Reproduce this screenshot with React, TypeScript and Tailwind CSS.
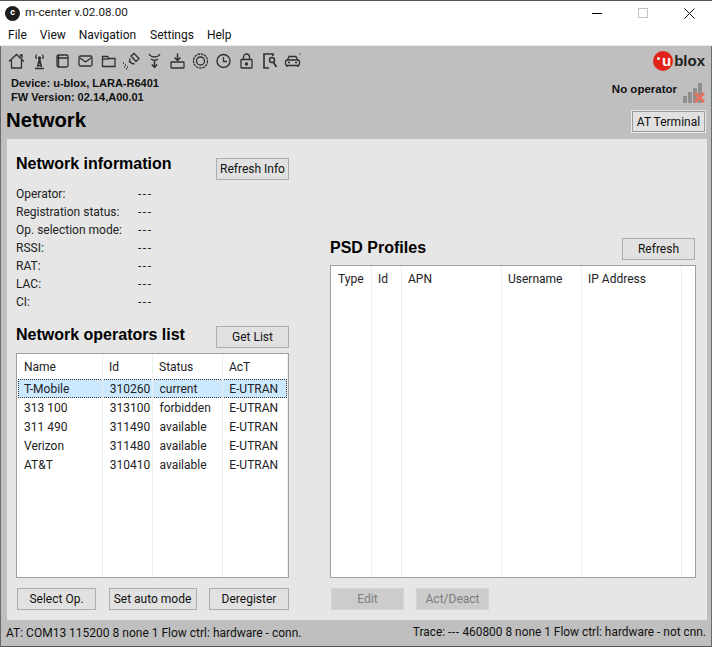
import type { ReactNode } from 'react';

const ui = "font-['Roboto','Noto_Sans',sans-serif]";
const bold = "font-['Liberation_Sans',Arial,sans-serif] font-bold";

function Btn({ label, className, disabled }: { label: string; className: string; disabled?: boolean }) {
    return (
        <div
            className={`flex items-center justify-center h-[22px] border text-[12px] ${
                disabled ? 'border-[#d4d4d4] bg-[#cccccc] text-[#7d7d7d]' : 'border-[#adadad] bg-[#e1e1e1] text-[#111]'
            } ${className}`}
        >
            {label}
        </div>
    );
}

function Ico({ children }: { children: ReactNode }) {
    return (
        <svg width="23" height="22" viewBox="0 0 23 22" fill="none" stroke="#303030" strokeWidth="1.3" className="shrink-0">
            {children}
        </svg>
    );
}

const tools: ReactNode[] = [
    <><path d="M4 11.5 11.5 4.5 19 11.5M6.5 10v8h10v-8M15.500 6.500V5h1.500v3" /></>,
    <><path d="M9.500 17 11.500 8.500 13.500 17M7 18.500h9M10.500 13h2M9.800 15.500h3.400" strokeWidth="1.500" /><path d="M8.500 4.500c-1 1.500-1 3 0 4.500M14.500 4.500c1 1.500 1 3 0 4.500" /><circle cx="11.500" cy="8" r="1" fill="#303030" /></>,
    <><rect x="6" y="5" width="11" height="12" rx="1.500" /><path d="M6 8h11M7.500 5v12" /></>,
    <><rect x="5" y="6" width="13" height="10" rx="1.500" /><path d="M6 8l5.500 4 5.500-4" strokeWidth="1.400" /></>,
    <><path d="M5.500 16.500V6.500h5l1.500 2h6v8z" /><path d="M5.500 9h6.500" /></>,
    <><path d="M11 6l3-2.500 5 5-3 3zM10 8.500c-1 2 0 5 4.500 5.500M9 11l2 2" /><path d="M3 13h1M5 15h1M4 17h1M7 17h1M6 19h1" strokeDasharray="1 1" /></>,
    <><path d="M6 4c1.500 2.500 3.500 3 5.500 3s4-.500 5.500-3M8 9c1 1 2 1.300 3.500 1.300S14 10 15 9" /><path d="M11.500 11v6M8.800 14.500l2.700 3 2.700-3" strokeWidth="1.500" /></>,
    <><rect x="5" y="12" width="13" height="6" rx=".5" /><path d="M11.500 3.500V10M8.500 7.500l3 3 3-3" strokeWidth="1.500" /></>,
    <><circle cx="11.500" cy="11" r="7" strokeDasharray="2.500 .8" /><circle cx="11.500" cy="11" r="4" /></>,
    <><circle cx="11.500" cy="11" r="6.500" strokeWidth="1.400" /><path d="M11.500 7v4.500H15" /></>,
    <><rect x="6" y="9.500" width="11" height="8.500" rx=".5" /><path d="M8.500 9.500V7a3 3 0 0 1 6 0v2.500" /><circle cx="11.500" cy="14" r="1" fill="#303030" /></>,
    <><path d="M15 6V4H6v14h5" strokeWidth="1.600" /><circle cx="14" cy="10" r="2.500" strokeWidth="1.500" /><path d="M15.500 12.500 18.500 17" strokeWidth="1.800" /></>,
    <><path d="M6.500 10l1.500-3.500h7l1.500 3.500" /><rect x="4.500" y="10" width="14" height="5.500" rx="2" /><path d="M6 15.500V17M17 15.500V17M7 12.500h2M14 12.500h2" /><path d="M18 3l2 2" stroke="#8a8a8a" /></>,
];

const operators = [
    ['T-Mobile', '310260', 'current', 'E-UTRAN'],
    ['313 100', '313100', 'forbidden', 'E-UTRAN'],
    ['311 490', '311490', 'available', 'E-UTRAN'],
    ['Verizon', '311480', 'available', 'E-UTRAN'],
    ['AT&T', '310410', 'available', 'E-UTRAN'],
];

const infoRows = ['Operator:', 'Registration status:', 'Op. selection mode:', 'RSSI:', 'RAT:', 'LAC:', 'CI:'];
const opCols = ['w-[86px]', 'w-[50px]', 'w-[70px]', 'w-[65px]'];
const psdCols = [
    ['Type', 'w-[41px] pl-[7px]'],
    ['Id', 'w-[30px] pl-[6px]'],
    ['APN', 'w-[100px] pl-[6px]'],
    ['Username', 'w-[80px] pl-[6px]'],
    ['IP Address', 'w-[100px] pl-[6px]'],
];

export default function App() {
    return (
        <div className={`w-[712px] h-[647px] flex flex-col overflow-hidden bg-[#bfbfbf] text-[#111] text-[12px] border-t border-[#555] ${ui}`}>
            {/* Title bar */}
            <div className="h-[24px] bg-white flex items-center shrink-0">
                <div className="ml-[5px] w-[15px] h-[15px] rounded-full bg-[#1c1c1c] text-white text-[9px] font-bold flex items-center justify-center">c</div>
                <span className="ml-[5px] text-[11.7px] text-[#222]">m-center v.02.08.00</span>
                <div className="ml-auto flex items-center">
                    <div className="w-[46px] flex justify-center"><div className="w-[10px] h-px bg-black" /></div>
                    <div className="w-[46px] flex justify-center"><div className="w-[10px] h-[10px] border border-[#c4c4c4]" /></div>
                    <div className="w-[46px] flex justify-center">
                        <svg width="11" height="11" viewBox="0 0 11 11" stroke="#111"><path d="M.5.5l10 10M10.500.5l-10 10" /></svg>
                    </div>
                </div>
            </div>
            {/* Menu */}
            <div className="h-[20px] bg-white flex items-center gap-[13px] pl-[8px] text-[12px] text-[#111] shrink-0">
                <span>File</span>
                <span>View</span>
                <span>Navigation</span>
                <span className="ml-px">Settings</span>
                <span>Help</span>
            </div>
            <div className="h-px bg-[#e8e8e8] shrink-0" />

            <div className="flex-1 flex flex-col border-x border-[#6b6b6b]">
                {/* Header */}
                <div className="h-[93px] shrink-0 flex justify-between pl-[4px] pr-[5px]">
                    <div className="flex flex-col">
                        <div className="flex pt-[4px]">{tools.map((t, i) => <Ico key={i}>{t}</Ico>)}</div>
                        <div className={`ml-[6px] mt-[4px] text-[11px] leading-[14px] text-[#111] ${bold}`}>
                            <div>Device: u-blox, LARA-R6401</div>
                            <div>FW Version: 02.14,A00.01</div>
                        </div>
                        <div className={`ml-px mt-[3px] text-[20.3px] leading-[26px] text-black ${bold}`}>Network</div>
                    </div>
                    <div className="flex flex-col items-end">
                        <div className="flex items-center mt-[5px] mr-px">
                            <div className={`relative w-[20px] h-[20px] rounded-full bg-[#e2231a] text-white text-[15px] flex items-center justify-center ${bold}`}>
                                <span className="ml-[7px]">u</span>
                                <div className="absolute left-[4px] top-[6px] w-[3px] h-[3px] rounded-full bg-white" />
                            </div>
                            <span className={`text-[15px] leading-[20px] text-[#222] ml-px ${bold}`}>blox</span>
                        </div>
                        <div className="flex items-start mt-[11px] mr-px">
                            <span className={`text-[11.500px] leading-[16px] -mt-px text-[#111] mr-[6px] ${bold}`}>No operator</span>
                            <svg width="22" height="21" viewBox="0 0 22 21">
                                <path d="M0 14h4v7H0zM5 10h4v11H5zM10 6h4v15h-4zM15 1h4v20h-4z" fill="#8f8f8f" />
                                <path d="M12 11l9 9M21 11l-9 9" stroke="#e9705f" strokeWidth="3" />
                            </svg>
                        </div>
                        <div className="mt-[7px] w-[75px] h-[23px] border-2 border-[#e9e9e9] outline outline-1 outline-[#9a9a9a] -outline-offset-2 bg-[#e1e1e1] flex items-center justify-center text-[12px]">
                            AT Terminal
                        </div>
                    </div>
                </div>

                {/* Main panel */}
                <div className="ml-[6px] mr-[4px] h-[481px] shrink-0 bg-[#e6e6e6] flex pl-[9px] pr-[11px]">
                    {/* Left column */}
                    <div className="w-[273px] flex flex-col">
                        <div className="flex justify-between mt-[19px] h-[22px]">
                            <div className={`text-[16px] leading-[12px] text-black ${bold}`}>Network information</div>
                            <Btn label="Refresh Info" className="w-[73px]" />
                        </div>
                        <div className="mt-[5px]">
                            {infoRows.map((r) => (
                                <div key={r} className="flex h-[18px] items-center text-[#222]">
                                    <span className="w-[122px]">{r}</span>
                                    <span className="tracking-[1.500px]">---</span>
                                </div>
                            ))}
                        </div>
                        <div className="flex justify-between mt-[15px] h-[22px]">
                            <div className={`text-[16px] leading-[18px] text-black ${bold}`}>Network operators list</div>
                            <Btn label="Get List" className="w-[73px]" />
                        </div>
                        <div className="mt-[5px] h-[225px] border border-[#a0a0a0] bg-white relative flex flex-col">
                            <div className="flex h-[25px] items-center text-[#222]">
                                {['Name', 'Id', 'Status', 'AcT'].map((h, i) => (
                                    <span key={h} className={`${i === 0 ? 'pl-[7px]' : 'pl-[6px]'} ${opCols[i]}`}>{h}</span>
                                ))}
                            </div>
                            <div className="px-px">
                                {operators.map((row, r) => (
                                    <div
                                        key={row[0]}
                                        className={`flex items-center h-[19px] text-[#222] ${r === 0 ? 'bg-[#cce8ff] outline-1 outline-dotted outline-[#333] -outline-offset-1' : ''}`}
                                    >
                                        {row.map((c, i) => (
                                            <span key={i} className={`${i === 0 ? 'pl-[6px] w-[85px]' : 'pl-[7px] ' + opCols[i]}`}>{c}</span>
                                        ))}
                                    </div>
                                ))}
                            </div>
                            {/* column separators */}
                            <div className="absolute inset-0 flex pointer-events-none">
                                {opCols.map((c) => <div key={c} className={`h-full border-r border-[#eeeeee] ${c}`} />)}
                            </div>
                        </div>
                        <div className="flex justify-between mt-[10px]">
                            <Btn label="Select Op." className="w-[79px] ml-px" />
                            <Btn label="Set auto mode" className="w-[88px]" />
                            <Btn label="Deregister" className="w-[80px]" />
                        </div>
                    </div>

                    {/* Right column */}
                    <div className="w-[367px] ml-[41px] flex flex-col">
                        <div className="flex justify-between mt-[99px] h-[22px] pr-px">
                            <div className={`text-[16px] leading-[20px] text-black ${bold}`}>PSD Profiles</div>
                            <Btn label="Refresh" className="w-[73px]" />
                        </div>
                        <div className="mt-[5px] h-[313px] border border-[#a0a0a0] bg-white flex text-[#222]">
                            {psdCols.map(([h, w]) => (
                                <div key={h} className={`h-full border-r border-[#eeeeee] pt-[4px] ${w}`}>{h}</div>
                            ))}
                        </div>
                        <div className="flex mt-[10px] ml-px gap-[12px]">
                            <Btn label="Edit" className="w-[73px]" disabled />
                            <Btn label="Act/Deact" className="w-[73px]" disabled />
                        </div>
                    </div>
                </div>

                {/* Status bar */}
                <div className="flex-1 flex items-center justify-between px-[5px] text-[12px] text-[#111] border-b border-[#555]">
                    <span>AT: COM13 115200 8 none 1 Flow ctrl: hardware - conn.</span>
                    <span className="text-[11.9px]">Trace: <span className="tracking-[0.500px]">---</span> 460800 8 none 1 Flow ctrl: hardware - not cnn.</span>
                </div>
            </div>
        </div>
    );
}
